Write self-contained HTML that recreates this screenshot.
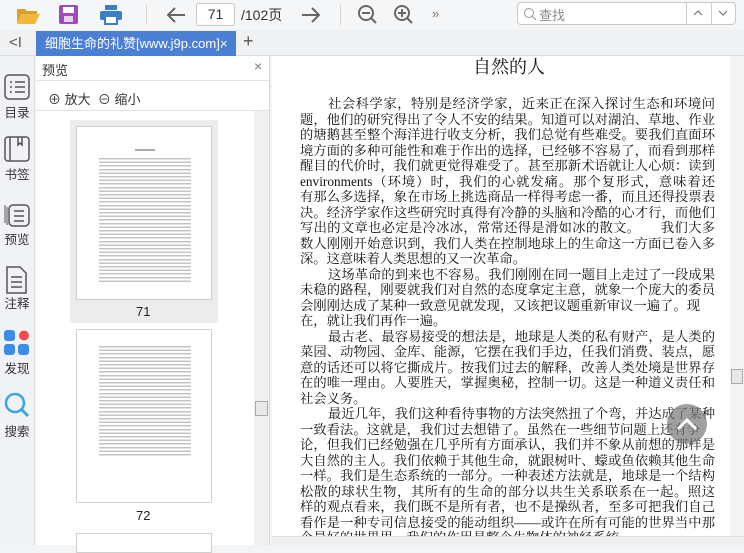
<!DOCTYPE html>
<html><head><meta charset="utf-8"><style>
*{margin:0;padding:0;box-sizing:border-box}
body{width:744px;height:545px;overflow:hidden;background:#f3f4f6;font-family:"Liberation Sans","Noto Sans CJK SC",sans-serif;position:relative}
.abs{position:absolute}
#tb{left:0;top:0;width:744px;height:30px;background:#f5f6f8}
#tabs{left:0;top:30px;width:744px;height:26px;background:#f0f1f3;border-bottom:1px solid #dcdde0}
#tab{left:36px;top:31px;width:200px;height:25px;background:#4a7fd4;color:#fff;font-size:13px;line-height:25px;padding-left:9px;white-space:nowrap;overflow:hidden}
#side{left:0;top:56px;width:35px;height:489px;background:#f1f2f5;border-right:1px solid #dfe0e3}
.lbl{position:absolute;left:0;width:34px;text-align:center;font-size:12.5px;color:#333}
#panel{left:36px;top:56px;width:234px;height:489px;background:#fff;border-right:1px solid #d8d8d8}
#doc{left:272px;top:56px;width:458px;height:489px;background:#fff;overflow:hidden}
.ln{position:absolute;left:300px;width:415px;font-family:"Liberation Serif","Noto Serif CJK SC",serif;font-size:13.3px;line-height:16px;height:16px;color:#111;white-space:nowrap;text-align:justify;text-align-last:justify}
.ln.s{text-align-last:left}
.ln.i{left:328px;width:387px}
.thumb{position:absolute;background:#fff;border:1px solid #cfcfcf}
</style></head><body>
<div id="tb" class="abs">
<svg class="abs" style="left:16px;top:5px" width="24" height="20"><path d="M1 4h8l2 2h10v3H6L1 18z" fill="#d9a030"/><path d="M5 9h19l-5 10H1z" fill="#f0b83c"/></svg>
<svg class="abs" style="left:59px;top:5px" width="20" height="20"><rect x="0" y="0" width="19" height="19" rx="2" fill="#9b4dbb"/><rect x="4" y="2" width="11" height="6" fill="#fff"/><rect x="5" y="11" width="9" height="6" fill="#e6d3ef"/></svg>
<svg class="abs" style="left:100px;top:5px" width="22" height="20"><rect x="5" y="0" width="12" height="5" fill="#3a7fc6"/><rect x="0" y="6" width="22" height="9" rx="2" fill="#3a7fc6"/><rect x="5" y="11" width="12" height="8" fill="#fff" stroke="#3a7fc6" stroke-width="2"/></svg>
<div class="abs" style="left:146px;top:5px;width:1px;height:20px;background:#d6d6d6"></div>
<svg class="abs" style="left:165px;top:5px" width="22" height="20"><path d="M20 10H3M10 3l-7 7 7 7" stroke="#666" stroke-width="2" fill="none"/></svg>
<div class="abs" style="left:196px;top:3px;width:39px;height:23px;background:#fff;border:1px solid #c8c8c8;border-radius:3px;font-size:14px;text-align:center;line-height:21px;color:#333">71</div>
<div class="abs" style="left:241px;top:5px;font-size:14px;color:#333">/102页</div>
<svg class="abs" style="left:300px;top:5px" width="22" height="20"><path d="M2 10h17M12 3l7 7-7 7" stroke="#666" stroke-width="2" fill="none"/></svg>
<div class="abs" style="left:340px;top:5px;width:1px;height:20px;background:#d6d6d6"></div>
<svg class="abs" style="left:357px;top:4px" width="22" height="22"><circle cx="9" cy="9" r="7" stroke="#666" stroke-width="2" fill="none"/><path d="M5 9h8M14 14l5 5" stroke="#666" stroke-width="2"/></svg>
<svg class="abs" style="left:393px;top:4px" width="22" height="22"><circle cx="9" cy="9" r="7" stroke="#666" stroke-width="2" fill="none"/><path d="M5 9h8M9 5v8M14 14l5 5" stroke="#666" stroke-width="2"/></svg>
<div class="abs" style="left:432px;top:6px;font-size:13px;color:#777">»</div>
<div class="abs" style="left:517px;top:2px;width:219px;height:23px;background:#fff;border:1px solid #c8c8c8;border-radius:4px"></div>
<svg class="abs" style="left:523px;top:7px" width="14" height="14"><circle cx="6" cy="6" r="4.5" stroke="#999" fill="none"/><path d="M9 9l4 4" stroke="#999"/></svg>
<div class="abs" style="left:539px;top:5px;font-size:13px;color:#888">查找</div>
<div class="abs" style="left:686px;top:2px;width:1px;height:23px;background:#ccc"></div>
<div class="abs" style="left:711px;top:2px;width:1px;height:23px;background:#ccc"></div>
<svg class="abs" style="left:693px;top:10px" width="10" height="6"><path d="M1 5l4-4 4 4" stroke="#666" fill="none"/></svg>
<svg class="abs" style="left:718px;top:10px" width="10" height="6"><path d="M1 1l4 4 4-4" stroke="#666" fill="none"/></svg>
</div>
<div id="tabs" class="abs"></div>
<div class="abs" style="left:9px;top:34px;font-size:15px;color:#555">&lt;I</div>
<div id="tab" class="abs">细胞生命的礼赞[www.j9p.com]. <span style="position:absolute;left:184px">×</span></div>
<div class="abs" style="left:243px;top:31px;font-size:18px;color:#555">+</div>
<div id="side" class="abs">
<svg class="abs" style="left:4px;top:18px" width="26" height="26"><rect x="1" y="1" width="24" height="24" rx="4" stroke="#555" stroke-width="1.5" fill="none"/><path d="M6 8h2M11 8h10M6 13h2M11 13h10M6 18h2M11 18h10" stroke="#555" stroke-width="1.6"/></svg>
<div class="lbl" style="top:46px">目录</div>
<svg class="abs" style="left:4px;top:80px" width="26" height="26"><rect x="1" y="1" width="24" height="24" rx="3" stroke="#555" stroke-width="1.5" fill="none"/><path d="M6 1v24M14 1v8l2-2 2 2V1" stroke="#555" stroke-width="1.5" fill="none"/></svg>
<div class="lbl" style="top:108px">书签</div>
<svg class="abs" style="left:3px;top:145px" width="28" height="28"><path d="M2 22V4M4 24V6" stroke="#555" fill="none"/><rect x="6" y="4" width="20" height="21" rx="4" stroke="#555" stroke-width="1.5" fill="#f1f2f5"/><path d="M11 10h10M11 15h10M11 20h10" stroke="#555" stroke-width="1.5"/></svg>
<div class="lbl" style="top:173px">预览</div>
<svg class="abs" style="left:6px;top:210px" width="22" height="28"><path d="M1 1h13l6 6v20H1z" stroke="#555" stroke-width="1.5" fill="none"/><path d="M5 11h11M5 16h11M5 21h11" stroke="#555" stroke-width="1.5"/></svg>
<div class="lbl" style="top:237px">注释</div>
<svg class="abs" style="left:4px;top:274px" width="26" height="26"><rect x="0" y="0" width="11" height="11" rx="3" fill="#3c8de8"/><circle cx="20" cy="5.5" r="5" fill="#f04a4a"/><rect x="0" y="14" width="11" height="11" rx="3" fill="#3c8de8"/><rect x="14" y="14" width="11" height="11" rx="3" fill="#3c8de8"/></svg>
<div class="lbl" style="top:302px">发现</div>
<svg class="abs" style="left:3px;top:335px" width="28" height="28"><circle cx="12" cy="12" r="9" stroke="#3aa6e0" stroke-width="2.5" fill="none"/><path d="M19 19l6 6" stroke="#3aa6e0" stroke-width="3"/></svg>
<div class="lbl" style="top:365px">搜索</div>
</div>
<div id="panel" class="abs">
<div class="abs" style="left:6px;top:4px;font-size:13px;color:#333">预览</div>
<div class="abs" style="left:218px;top:2px;font-size:14px;color:#777">×</div>
<div class="abs" style="left:0;top:24px;width:233px;height:1px;background:#e2e2e2"></div>
<div class="abs" style="left:12px;top:33px;font-size:13px;color:#333">⊕ 放大 &nbsp;⊖ 缩小</div>
<div class="abs" style="left:0;top:54px;width:233px;height:1px;background:#e2e2e2"></div>
<div class="abs" style="left:218px;top:55px;width:15px;height:434px;background:#f0f0f0"></div>
<div class="abs" style="left:219px;top:345px;width:13px;height:15px;background:#e8e8e8;border:1px solid #aaa"></div>
<div class="abs" style="left:34px;top:64px;width:148px;height:203px;background:#ececec"></div>
<div class="thumb" style="left:40px;top:70px;width:136px;height:174px">
<div class="abs" style="left:58px;top:22px;width:20px;height:2px;background:#aaa"></div>
<div class="abs" style="left:22px;top:31px;width:92px;height:126px;background:repeating-linear-gradient(#c4c4c4 0 1.5px,#fff 1.5px 3.6px)"></div>
</div>
<div class="abs" style="left:100px;top:248px;font-size:13px;color:#222">71</div>
<div class="thumb" style="left:40px;top:273px;width:136px;height:174px">
<div class="abs" style="left:22px;top:16px;width:92px;height:110px;background:repeating-linear-gradient(#c4c4c4 0 1.5px,#fff 1.5px 3.6px)"></div>
</div>
<div class="abs" style="left:100px;top:452px;font-size:13px;color:#222">72</div>
<div class="thumb" style="left:40px;top:477px;width:136px;height:20px"></div>
</div>
<div id="doc" class="abs"></div>
<div class="abs" style="left:730px;top:56px;width:14px;height:479px;background:#f4f4f4"></div>
<div class="abs" style="left:731px;top:369px;width:12px;height:15px;background:#e8e8e8;border:1px solid #aaa"></div>
<div class="abs" style="left:473px;top:53px;font-family:'Liberation Serif','Noto Serif CJK SC',serif;font-size:18px;color:#111">自然的人</div>
<div class="ln i" style="top:96px">社会科学家，特别是经济学家，近来正在深入探讨生态和环境问</div>
<div class="ln" style="top:111.5px">题，他们的研究得出了令人不安的结果。知道可以对湖泊、草地、作业</div>
<div class="ln" style="top:127px">的塘鹅甚至整个海洋进行收支分析，我们总觉有些难受。要我们直面环</div>
<div class="ln" style="top:142.5px">境方面的多种可能性和难于作出的选择，已经够不容易了，而看到那样</div>
<div class="ln" style="top:158px">醒目的代价时，我们就更觉得难受了。甚至那新术语就让人心烦：读到</div>
<div class="ln" style="top:173.5px">environments（环境）时，我们的心就发痛。那个复形式，意味着还</div>
<div class="ln" style="top:189px">有那么多选择，象在市场上挑选商品一样得考虑一番，而且还得投票表</div>
<div class="ln" style="top:204.5px">决。经济学家作这些研究时真得有冷静的头脑和冷酷的心才行，而他们</div>
<div class="ln" style="top:220px">写出的文章也必定是冷冰冰，常常还得是滑如冰的散文。　　我们大多</div>
<div class="ln" style="top:235.5px">数人刚刚开始意识到，我们人类在控制地球上的生命这一方面已卷入多</div>
<div class="ln s" style="top:251px">深。这意味着人类思想的又一次革命。</div>
<div class="ln i" style="top:266.5px">这场革命的到来也不容易。我们刚刚在同一题目上走过了一段成果</div>
<div class="ln" style="top:282px">未稳的路程，刚要就我们对自然的态度拿定主意，就象一个庞大的委员</div>
<div class="ln" style="top:297.5px;width:400px">会刚刚达成了某种一致意见就发现，又该把议题重新审议一遍了。现</div>
<div class="ln s" style="top:313px">在，就让我们再作一遍。</div>
<div class="ln i" style="top:328.5px">最古老、最容易接受的想法是，地球是人类的私有财产，是人类的</div>
<div class="ln" style="top:344px">菜园、动物园、金库、能源，它摆在我们手边，任我们消费、装点，愿</div>
<div class="ln" style="top:359.5px">意的话还可以将它撕成片。按我们过去的解释，改善人类处境是世界存</div>
<div class="ln" style="top:375px">在的唯一理由。人要胜天，掌握奥秘，控制一切。这是一种道义责任和</div>
<div class="ln s" style="top:390.5px">社会义务。</div>
<div class="ln i" style="top:406px">最近几年，我们这种看待事物的方法突然扭了个弯，并达成了某种</div>
<div class="ln" style="top:421.5px;width:400px">一致看法。这就是，我们过去想错了。虽然在一些细节问题上还有争</div>
<div class="ln" style="top:437px">论，但我们已经勉强在几乎所有方面承认，我们并不象从前想的那样是</div>
<div class="ln" style="top:452.5px">大自然的主人。我们依赖于其他生命，就跟树叶、蠓或鱼依赖其他生命</div>
<div class="ln" style="top:468px">一样。我们是生态系统的一部分。一种表述方法就是，地球是一个结构</div>
<div class="ln" style="top:483.5px">松散的球状生物，其所有的生命的部分以共生关系联系在一起。照这</div>
<div class="ln" style="top:499px">样的观点看来，我们既不是所有者，也不是操纵者，至多可把我们自己</div>
<div class="ln" style="top:514.5px">看作是一种专司信息接受的能动组织——或许在所有可能的世界当中那</div>
<div class="ln s" style="top:530px">个最好的世界里，我们的作用是整个生物体的神经系统。</div>
<div class="abs" style="left:272px;top:536px;width:472px;height:9px;background:#f0f0f0;border-top:1px solid #ddd"></div>
<div class="abs" style="left:667px;top:404px;width:40px;height:40px;border-radius:50%;background:rgba(120,120,120,0.7)"></div>
<svg class="abs" style="left:675px;top:412px" width="24" height="24"><path d="M3 17l9-9 9 9" stroke="#fff" stroke-width="3" fill="none"/></svg>
</body></html>
